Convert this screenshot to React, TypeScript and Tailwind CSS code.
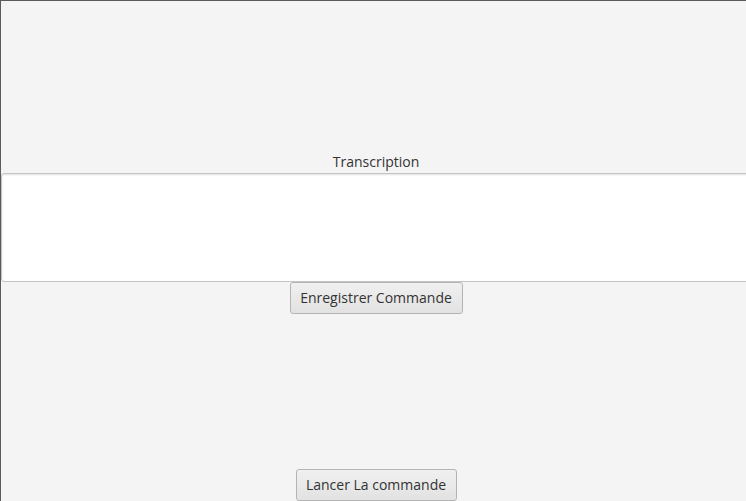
export default function App() {
  return (
    <div
      className="h-[501px] w-[746px] overflow-hidden border-l border-t border-[#5a5a5a] bg-[#f4f4f4] text-[#333333]"
      style={{ fontFamily: '"Open Sans", "Noto Sans", sans-serif' }}
    >
      <div className="flex w-[750px] flex-col items-center pt-[150px]">
        {/* Libellé */}
        <div className="h-[22px] text-[14px] leading-[21px]">Transcription</div>

        {/* Zone de texte */}
        <div className="h-[109px] w-[750px] rounded-[3px] border border-[#c4c4c4] bg-white shadow-[inset_0_1px_2px_rgba(0,0,0,0.12)]" />

        {/* Bouton enregistrer */}
        <button className="h-[32px] w-[173px] rounded-[3px] border border-[#b4b4b4] bg-gradient-to-b from-[#f0f0f0] to-[#e2e2e2] pb-[2px] text-[14px] text-[#333333]">
          Enregistrer Commande
        </button>

        {/* Bouton lancer */}
        <button className="mt-[155px] h-[32px] w-[161px] rounded-[3px] border border-[#b4b4b4] bg-gradient-to-b from-[#f0f0f0] to-[#e2e2e2] pb-[2px] text-[14px] text-[#333333]">
          Lancer La commande
        </button>
      </div>
    </div>
  );
}
